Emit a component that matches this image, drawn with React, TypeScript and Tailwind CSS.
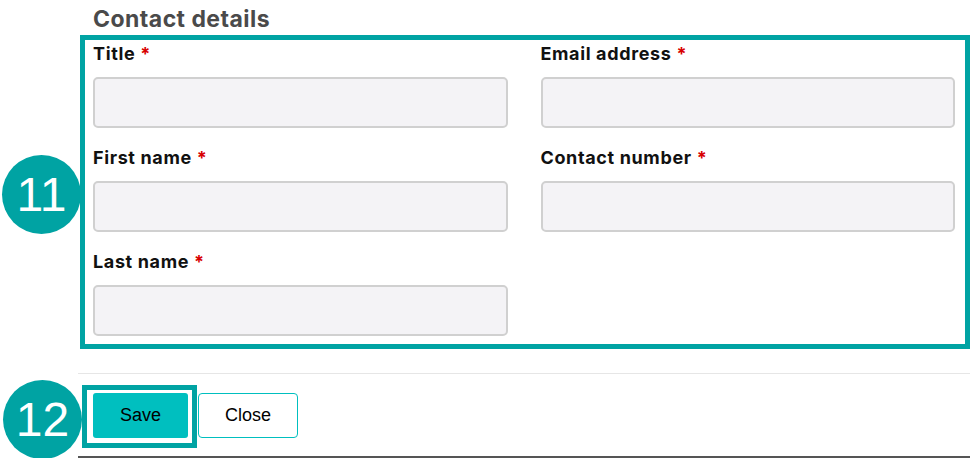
import React from "react";

const Field = ({ label }: { label: string }) => (
  <div className="flex flex-col">
    <div className="h-[26px] pt-[2px] flex items-center text-[18px] font-bold text-[#111] tracking-[0.035em] leading-none" style={{ fontFamily: "Inter, sans-serif" }}>
      <span>{label}</span>
      <span className="ml-[5px] text-[#d80000]">*</span>
    </div>
    <div className="mt-[11px] h-[51px] rounded-[5px] border-2 border-[#d0d0d0] bg-[#f4f3f6]" />
  </div>
);

export default function App() {
  return (
    <div className="relative w-[970px] h-[458px] bg-white overflow-hidden">
      <div className="absolute left-[2px] top-[155px] w-[79px] h-[79px] rounded-full bg-[#00a3a3] flex items-center justify-center text-white text-[48px] leading-none" style={{ fontFamily: "'Liberation Sans', Arial, sans-serif" }}>
        11
      </div>
      <div className="absolute left-[3px] top-[380px] w-[79px] h-[79px] rounded-full bg-[#00a3a3] flex items-center justify-center text-white text-[48px] leading-none" style={{ fontFamily: "'Liberation Sans', Arial, sans-serif" }}>
        12
      </div>
      <div className="ml-[78px] w-[892px] flex flex-col">
        <div className="h-[35px] pl-[15px] pt-[3px] flex items-center text-[23px] font-bold text-[#4a4a4a] tracking-[0.02em]" style={{ fontFamily: "Inter, sans-serif" }}>
          Contact details
        </div>
        <div className="relative ml-[2px] w-[890px] h-[314px] border-[5px] border-[#00a3a3] bg-white pl-[8px] pr-[10px]">
          <div className="grid grid-cols-2 gap-x-[33px] gap-y-[16px]">
            <Field label="Title" />
            <Field label="Email address" />
            <Field label="First name" />
            <Field label="Contact number" />
            <Field label="Last name" />
          </div>
        </div>
        <div className="mt-[24px] h-[1px] bg-[#e6e6e6]" />
        <div className="mt-[11px] flex items-start" style={{ fontFamily: "'Liberation Sans', Arial, sans-serif" }}>
          <div className="ml-[4px] border-[5px] border-[#00a3a3] pl-[6px] pr-[4px] pt-[3px] pb-[5px] bg-white">
            <button className="w-[95px] h-[45px] rounded-[3px] bg-[#00bfbf] text-[18px] text-black">Save</button>
          </div>
          <button className="ml-[1px] mt-[8px] w-[100px] h-[45px] rounded-[4px] border border-[#00bfbf] bg-white text-[18px] text-black">Close</button>
        </div>
        <div className="mt-[8px] h-[2px] bg-[#555]" />
      </div>
    </div>
  );
}
